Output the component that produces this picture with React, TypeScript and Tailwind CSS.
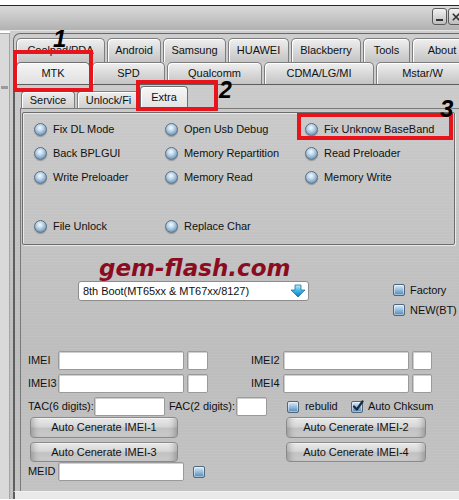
import React from 'react';

// brushed steel backdrop used by the main window
const steel =
  "bg-[repeating-linear-gradient(0deg,rgba(255,255,255,0.05)_0px,rgba(255,255,255,0.05)_1px,transparent_1px,transparent_3px),linear-gradient(180deg,#cdcdcd_0%,#c5c5c5_35%,#bdbdbd_70%,#c2c2c2_100%)]";

function Tab({ label, w, active }: { label: string; w: string; active?: boolean }) {
  return (
    <div
      className={`${w} h-full shrink-0 flex items-center justify-center rounded-t-[5px] border border-b-0 shadow-[inset_1px_1px_0_#ffffff] ${
        active
          ? "border-[#6f6f6f] bg-[linear-gradient(180deg,#f5f5f5_0%,#e0e0e0_100%)]"
          : "border-[#7e7e7e] bg-[linear-gradient(180deg,#efefef_0%,#d7d7d7_55%,#c4c4c4_100%)]"
      }`}
    >
      <span className="whitespace-nowrap">{label}</span>
    </div>
  );
}

function SubTab({ label, w, active }: { label: string; w: string; active?: boolean }) {
  return (
    <div
      className={`${w} shrink-0 flex items-center justify-center rounded-t-[4px] border border-b-0 shadow-[inset_1px_1px_0_#ffffff] overflow-hidden ${
        active
          ? "h-[22px] border-[#6f6f6f] bg-[linear-gradient(180deg,#f6f6f6_0%,#e2e2e2_100%)]"
          : "h-[17px] border-[#7e7e7e] bg-[linear-gradient(180deg,#ededed_0%,#cfcfcf_100%)]"
      }`}
    >
      <span className="whitespace-nowrap">{label}</span>
    </div>
  );
}

function Radio({ label }: { label: string }) {
  return (
    <div className="flex items-center gap-[6px] h-[24px]">
      <span className="block w-[13px] h-[13px] shrink-0 rounded-full border border-[#5f6f7f] bg-[radial-gradient(circle_at_45%_35%,#f7fbff_0%,#bcd5ea_35%,#7199bb_75%,#4d6f8f_100%)] shadow-[0_1px_1px_rgba(0,0,0,0.25)]" />
      <span className="whitespace-nowrap">{label}</span>
    </div>
  );
}

function Check({ checked }: { checked?: boolean }) {
  return (
    <span className="relative block w-[12px] h-[12px] shrink-0 rounded-[2px] border border-[#50667a] bg-[linear-gradient(180deg,#dbeaf7_0%,#95bcdd_50%,#4f86b6_100%)] shadow-[inset_0_0_0_1px_rgba(255,255,255,0.45)]">
      {checked && (
        <svg viewBox="0 0 12 12" className="absolute left-[0px] top-[-2px] w-[12px] h-[12px]">
          <path d="M2 6.5 L4.8 9.5 L10.5 1.5" fill="none" stroke="#1b2a3c" strokeWidth="2.2" strokeLinecap="round" strokeLinejoin="round" />
        </svg>
      )}
    </span>
  );
}

function Field({ w }: { w: string }) {
  return (
    <div className={`${w} h-full shrink-0 bg-white border border-[#9a9a9a] rounded-[2px] shadow-[inset_1px_1px_0_#cfcfcf]`} />
  );
}

function Btn({ label, w }: { label: string; w: string }) {
  return (
    <div
      className={`${w} h-full shrink-0 flex items-center justify-center rounded-[4px] border border-[#8a8a8a] bg-[linear-gradient(180deg,#ebebeb_0%,#d6d6d6_45%,#c2c2c2_55%,#cbcbcb_100%)] shadow-[inset_7px_0_6px_-5px_rgba(0,0,0,0.25),inset_-7px_0_6px_-5px_rgba(0,0,0,0.25),inset_0_1px_0_#f8f8f8]`}
    >
      <span className="whitespace-nowrap">{label}</span>
    </div>
  );
}

const leftRadios = ["Fix DL Mode", "Back BPLGUI", "Write Preloader"];
const midRadios = ["Open Usb Debug", "Memory Repartition", "Memory Read"];
const rightRadios = ["Fix Unknow BaseBand", "Read Preloader", "Memory Write"];

export default function App() {
  return (
    <div className="relative w-[459px] h-[500px] overflow-hidden bg-white text-[#111] font-['Liberation_Sans',Arial,sans-serif] text-[11px] tracking-[-0.05px]">
      <div className="h-[5px] bg-white" />

      {/* title bar */}
      <div className="h-[26px] border-t border-[#262626] border-b border-b-[#e4e4e4] bg-[linear-gradient(180deg,#dadada_0%,#c6c6c6_50%,#b2b2b2_100%)] flex justify-end items-start pt-[2px] mr-[-5px]">
        <div className="w-[15px] h-[17px] rounded-[3px] border border-[#5a5a5a] bg-[linear-gradient(180deg,#f2f2f2_0%,#bdbdbd_100%)] flex items-end justify-center pb-[3px]">
          <span className="w-[7px] h-[2px] bg-[#333]" />
        </div>
        <div className="w-[16px] h-[17px] ml-[1px] rounded-[3px] border border-[#5a5a5a] bg-[linear-gradient(180deg,#f2f2f2_0%,#bdbdbd_100%)] flex items-center justify-center">
          <svg viewBox="0 0 10 10" className="w-[8px] h-[8px]">
            <path d="M1 1 L9 9 M9 1 L1 9" stroke="#333" strokeWidth="2" />
          </svg>
        </div>
      </div>

      <div className="flex h-[468px]">
        {/* window behind, left edge */}
        <div className="w-[10px] shrink-0 mt-[2px] bg-[#d9d9d9] border-t border-r border-[#a4a4a4] flex flex-col">
          <div className="h-[52px]" />
          <div className="h-[3px] mx-[1px] bg-[#9a9a9a]" />
        </div>

        <div className={`flex-1 min-w-0 flex flex-col ${steel} bg-[#b8b8b8]`}>
          {/* device tabs */}
          <div className="ml-[3px] mt-[2px] border-l border-t border-[#6a6a6a] rounded-tl-[7px] pl-[2px] pt-[4px] overflow-hidden">
            <div className="flex gap-[2px] h-[24px]">
              <Tab label="Coolpad/PDA" w="w-[89px]" />
              <Tab label="Android" w="w-[54px]" />
              <Tab label="Samsung" w="w-[63px]" />
              <Tab label="HUAWEI" w="w-[61px]" />
              <Tab label="Blackberry" w="w-[70px]" />
              <Tab label="Tools" w="w-[47px]" />
              <Tab label="About" w="w-[60px]" />
            </div>
            <div className="flex gap-[2px] h-[22px]">
              <Tab label="MTK" w="w-[74px]" active />
              <Tab label="SPD" w="w-[73px]" />
              <Tab label="Qualcomm" w="w-[95px]" />
              <Tab label="CDMA/LG/MI" w="w-[110px]" />
              <Tab label="Mstar/W" w="w-[93px]" />
            </div>
          </div>

          {/* MTK page */}
          <div className="flex-1 ml-[3px] border-l-2 border-t border-[#5e5e5e] pl-[5px] flex flex-col">
            <div className="flex items-end h-[23px] pl-[1px]">
              <SubTab label="Service" w="w-[54px]" />
              <div className="w-[2px]" />
              <SubTab label="Unlock/Fi" w="w-[63px]" />
              <SubTab label="Extra" w="w-[48px]" active />
            </div>

            <div className="flex-1 border-l border-t border-[#7a7a7a] pl-[1px] pt-[3px] flex flex-col">
              {/* Extra functions */}
              <div className="w-[433px] border border-[#6c6c6c] rounded-[2px] shadow-[inset_1px_1px_0_#e8e8e8,1px_1px_0_#e8e8e8] pt-[4px] pb-[6px] pl-[11px]">
                <div className="grid grid-cols-[131px_140px_1fr]">
                  <div className="flex flex-col">
                    {leftRadios.map((r) => (
                      <Radio key={r} label={r} />
                    ))}
                  </div>
                  <div className="flex flex-col">
                    {midRadios.map((r) => (
                      <Radio key={r} label={r} />
                    ))}
                  </div>
                  <div className="flex flex-col">
                    {rightRadios.map((r) => (
                      <Radio key={r} label={r} />
                    ))}
                  </div>
                </div>
                <div className="h-[25px]" />
                <div className="grid grid-cols-[131px_140px_1fr]">
                  <Radio label="File Unlock" />
                  <Radio label="Replace Char" />
                </div>
              </div>

              {/* watermark */}
              <div className="mt-[10px] ml-[77px] h-[26px] leading-[26px] font-['DejaVu_Sans',sans-serif] font-bold italic text-[23px] tracking-normal text-[#8c0c1f]">
                gem-flash.com
              </div>

              <div className="flex items-start">
                <div className="ml-[56px] w-[231px] h-[20px] shrink-0 bg-white border border-[#8c8c8c] rounded-[3px] flex items-center pl-[4px] pr-[2px]">
                  <span className="flex-1 whitespace-nowrap">8th Boot(MT65xx &amp; MT67xx/8127)</span>
                  <svg viewBox="0 0 16 14" className="w-[16px] h-[14px]">
                    <defs>
                      <linearGradient id="arrowFill" x1="0" y1="0" x2="0" y2="1">
                        <stop offset="0" stopColor="#bff0ff" />
                        <stop offset="0.5" stopColor="#35b6e6" />
                        <stop offset="1" stopColor="#1273b8" />
                      </linearGradient>
                    </defs>
                    <path d="M5 1 H11 V6 H15 L8 13 L1 6 H5 Z" fill="url(#arrowFill)" stroke="#2a6f9a" strokeWidth="0.8" />
                  </svg>
                </div>
                <div className="ml-[84px] mt-[3px] flex flex-col gap-[8px]">
                  <div className="flex items-center gap-[5px] h-[12px]">
                    <Check />
                    <span>Factory</span>
                  </div>
                  <div className="flex items-center gap-[5px] h-[12px]">
                    <Check />
                    <span>NEW(BT)</span>
                  </div>
                </div>
              </div>

              {/* IMEI fields */}
              <div className="mt-[35px] h-[19px] flex items-center pl-[6px]">
                <span className="w-[30px]">IMEI</span>
                <Field w="w-[126px]" />
                <div className="w-[3px]" />
                <Field w="w-[21px]" />
                <span className="ml-[43px] w-[32px]">IMEI2</span>
                <Field w="w-[126px]" />
                <div className="w-[3px]" />
                <Field w="w-[20px]" />
              </div>
              <div className="mt-[4px] h-[19px] flex items-center pl-[6px]">
                <span className="w-[30px]">IMEI3</span>
                <Field w="w-[126px]" />
                <div className="w-[3px]" />
                <Field w="w-[21px]" />
                <span className="ml-[43px] w-[32px]">IMEI4</span>
                <Field w="w-[126px]" />
                <div className="w-[3px]" />
                <Field w="w-[20px]" />
              </div>
              <div className="mt-[4px] h-[19px] flex items-center pl-[6px]">
                <span className="w-[66px] whitespace-nowrap">TAC(6 digits):</span>
                <Field w="w-[71px]" />
                <span className="ml-[4px] w-[67px] whitespace-nowrap">FAC(2 digits):</span>
                <Field w="w-[31px]" />
                <div className="ml-[20px] flex items-center">
                  <Check />
                  <span className="ml-[6px] w-[46px]">rebulid</span>
                  <Check checked />
                  <span className="ml-[5px] whitespace-nowrap">Auto Chksum</span>
                </div>
              </div>
              <div className="mt-[1px] h-[21px] flex pl-[8px]">
                <Btn label="Auto Cenerate IMEI-1" w="w-[148px]" />
                <div className="w-[108px]" />
                <Btn label="Auto Cenerate IMEI-2" w="w-[140px]" />
              </div>
              <div className="mt-[4px] h-[20px] flex pl-[8px]">
                <Btn label="Auto Cenerate IMEI-3" w="w-[148px]" />
                <div className="w-[108px]" />
                <Btn label="Auto Cenerate IMEI-4" w="w-[140px]" />
              </div>
              <div className="h-[19px] flex items-center pl-[6px]">
                <span className="w-[30px]">MEID</span>
                <Field w="w-[126px]" />
                <div className="ml-[9px]">
                  <Check />
                </div>
              </div>
            </div>
          </div>

          <div className="h-[8px] border-t border-[#f2f2f2] bg-[#e9e9e9] ml-[3px] border-l-2 border-l-[#5e5e5e]" />
        </div>
      </div>

      {/* callouts */}
      <div className="absolute left-[13px] top-[50px] w-[80px] h-[42px] border-4 border-[#e8141c]" />
      <div className="absolute left-[136px] top-[80px] w-[82px] h-[31px] border-4 border-[#e8141c]" />
      <div className="absolute left-[297px] top-[113px] w-[156px] h-[27px] border-4 border-[#e8141c]" />
      <span className="absolute left-[53px] top-[27px] font-bold italic text-[24px] leading-none text-black">1</span>
      <span className="absolute left-[219px] top-[79px] font-bold italic text-[23px] leading-none text-black">2</span>
      <span className="absolute left-[440px] top-[97px] font-bold italic text-[24px] leading-none text-black">3</span>
    </div>
  );
}
